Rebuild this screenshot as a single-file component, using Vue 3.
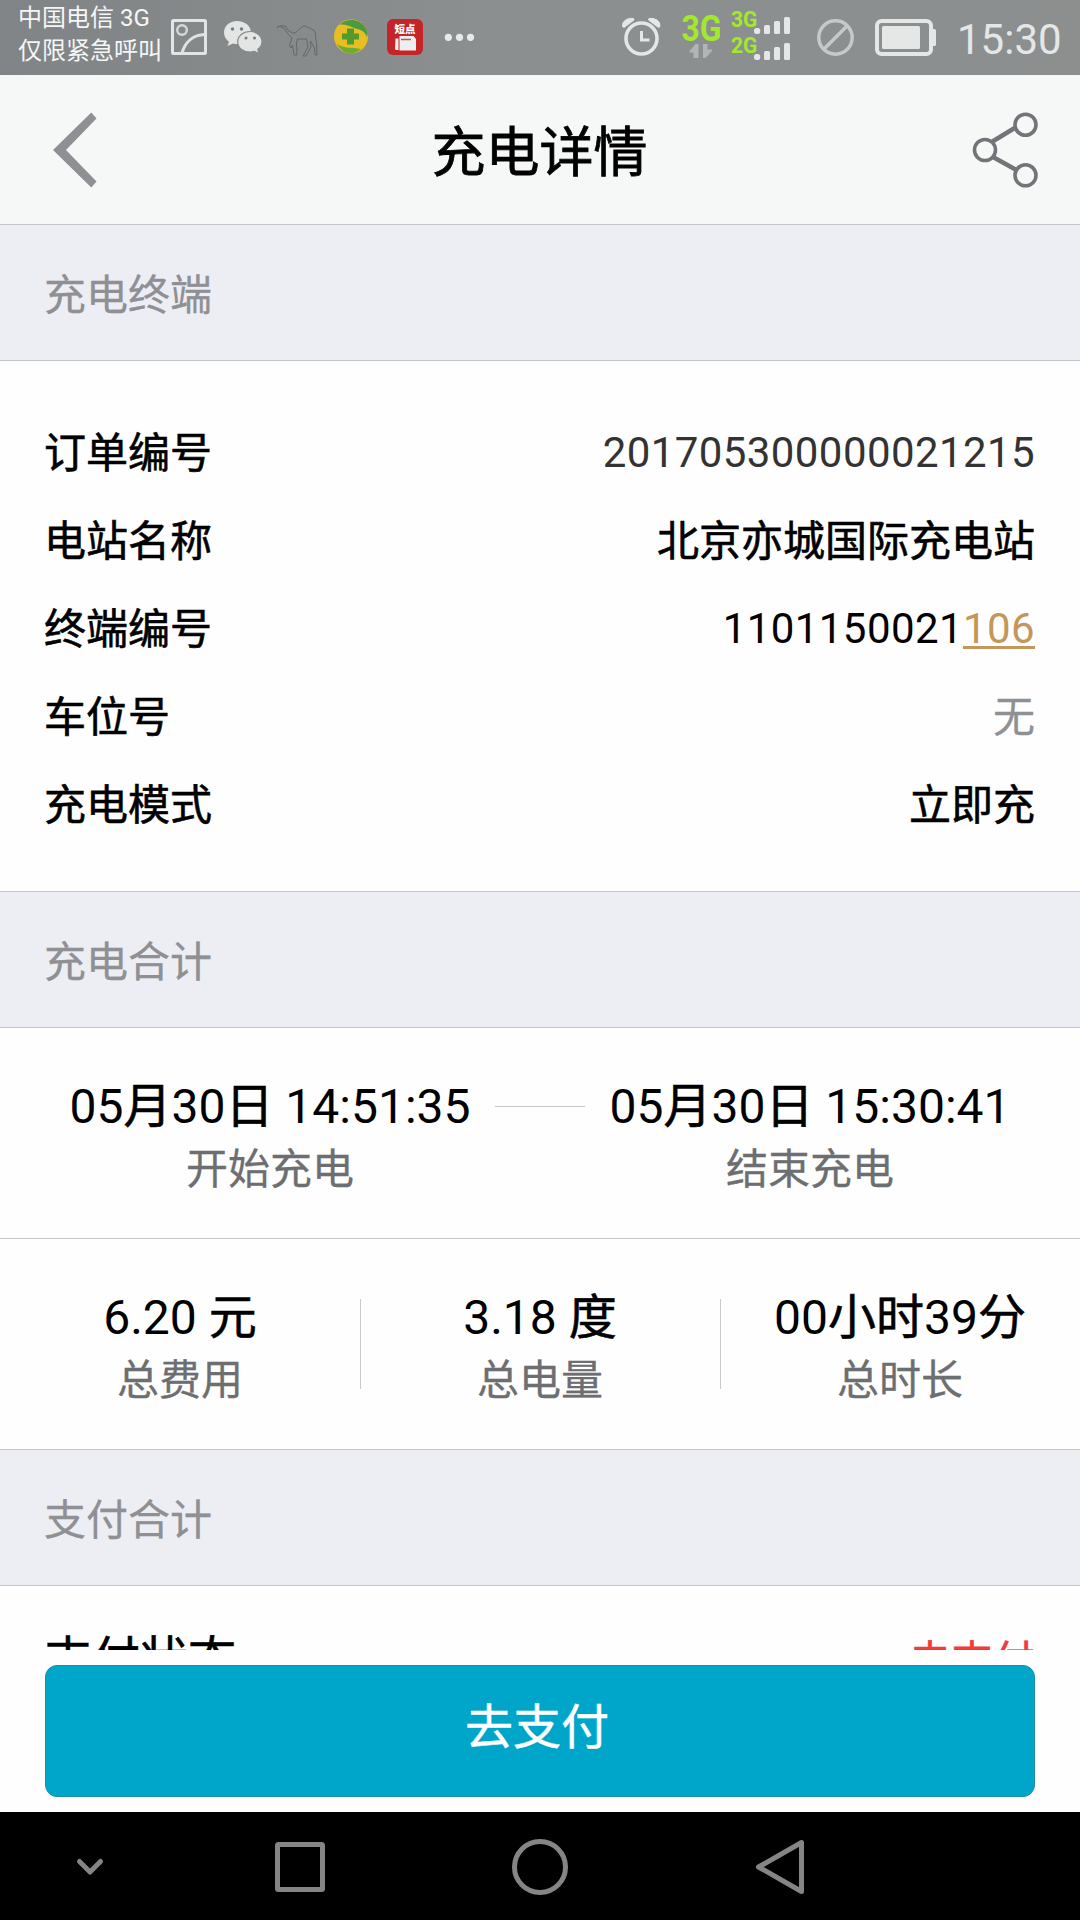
<script setup>
const totals = [
  { parts: ['6.20 ', '元'], label: '总费用' },
  { parts: ['3.18 ', '度'], label: '总电量' },
  { parts: ['00', '小时', '39', '分'], label: '总时长' },
]
const times = [
  { parts: ['05', '月', '30', '日', ' 14:51:35'], label: '开始充电' },
  { parts: ['05', '月', '30', '日', ' 15:30:41'], label: '结束充电' },
]
</script>

<template>
  <div class="screen">
    <div class="status">
      <div class="carrier">
        <div>中国电信 3G</div>
        <div>仅限紧急呼叫</div>
      </div>
      <svg class="tray" width="320" height="75" viewBox="165 0 320 75">
        <rect x="172.5" y="20.5" width="33" height="33" rx="1" fill="none" stroke="#e3e5e5" stroke-width="3" />
        <circle cx="182" cy="30" r="4.8" fill="none" stroke="#d5d8d8" stroke-width="2.4" />
        <path d="M182 53C185 42 193 35 205 34.500" fill="none" stroke="#e0e2e2" stroke-width="3" />
        <path d="M237 21c-7.500 0-13 5-13 11.500 0 4 2 7 5 9.200l-1.500 4.300 5.500-2.500c1.500.400 3 .600 5 .600 7.500 0 13-5 13-11.600C251 26 245 21 237 21z" fill="#e3e5e5" />
        <path d="M250 31.500c-7 0-12.300 4.500-12.300 10.300 0 6 5.300 10.200 12.300 10.200 1.500 0 3-.2 4.300-.7l4.700 2.200-1.200-4.200c2.700-2 4.200-4.500 4.200-7.500 0-5.800-5-10.300-12-10.300z" fill="#e3e5e5" stroke="#85898a" stroke-width="1.200" />
        <g fill="#777b7c"><circle cx="232.500" cy="29" r="1.700" /><circle cx="241.500" cy="29" r="1.700" /><circle cx="246" cy="38" r="1.500" /><circle cx="254.500" cy="38" r="1.500" /></g>
        <path d="M277.500 27.500l3.500-2 5 1 1.500 3.500 5 3q3.500.5 6-3l2-2 3-2 3 .5 4 2 3.500 2q2 2 1.500 6l1 6 .5 12.500h-2l-.5-7-4-7 .5 6-5 9h-3l5-9-1.500-8-9 0-1 4 .5 12h-3l-1.500-10-1.500 3-1.500-3 2.500-7-5-5-3-5-6-2z" fill="none" stroke="#65696a" stroke-width="1" stroke-linejoin="round" />
        <circle cx="351" cy="36.500" r="17" fill="#e7bf22" />
        <path d="M339 25c8-8 21-6 26 2 3 4 3 8 2 10-3-8-9-7-15-10-5-2-9-3-13-2z" fill="#4c9a40" />
        <path d="M337 44c7 5 15 3 24 5-7 7-18 6-24-5z" fill="#6dac32" />
        <path d="M347 28.500h7v5h5v6h-5v5h-7v-5h-5v-6h5z" fill="#52992e" />
        <rect x="387" y="19" width="36" height="36" rx="6" fill="#c52528" />
        <path d="M395.500 38.500h3V50h-2q-1.500 0-1.500-1.500zM399.500 36h14l2.500 3v11.500h-16.500z" fill="#eeeeee" />
        <path d="M401 39.500h10" stroke="#bd5a5a" stroke-width="1.500" />
        <text x="394.500" y="33" font-size="10.500" font-weight="900" fill="#fff">短点</text>
        <g fill="#e8eaea"><circle cx="448.300" cy="37.300" r="3.600" /><circle cx="459.500" cy="37.300" r="3.600" /><circle cx="470.500" cy="37.300" r="3.600" /></g>
      </svg>
      <svg class="signals" width="330" height="75" viewBox="615 0 330 75">
        <circle cx="641.500" cy="38.500" r="15.500" fill="none" stroke="#e5e7e7" stroke-width="3.600" />
        <path d="M641.500 31v9h8" fill="none" stroke="#e5e7e7" stroke-width="3" />
        <path d="M622.500 26.500q-.5-4 3-6.500 4-2.500 8-1.500l.5 1.500-10 7.500zM660 26.500q.500-4-3-6.500-4-2.500-8-1.500l-.5 1.500 10 7.500z" fill="#e5e7e7" stroke="#e5e7e7" />
        <g fill="#a2e82d" font-weight="700">
          <text x="681.500" y="40.500" font-size="36" textLength="40" lengthAdjust="spacingAndGlyphs">3G</text>
          <text x="731" y="26.500" font-size="21.500" textLength="26.500" lengthAdjust="spacingAndGlyphs">3G</text>
          <text x="731" y="52.500" font-size="21.500" textLength="26.500" lengthAdjust="spacingAndGlyphs">2G</text>
        </g>
        <path d="M698.500 44v14h-5v-5.500h-4V51l6-7zM703 58v-14h4.500v5.500h4.500V51l-6.500 7z" fill="#b2b5b5" />
        <g fill="#e5e7e7">
          <rect x="754" y="28" width="6.200" height="6" rx="2.500" /><rect x="764" y="25" width="6" height="9" rx="1.500" /><rect x="774" y="21" width="6" height="13" rx="1.500" /><rect x="784" y="17" width="6" height="17" rx="1.500" />
          <rect x="754" y="54" width="6.200" height="6" rx="2.500" /><rect x="764" y="51" width="6" height="9" rx="1.500" /><rect x="774" y="47" width="6" height="13" rx="1.500" /><rect x="784" y="43" width="6" height="17" rx="1.500" />
        </g>
        <g fill="none" stroke="#c6c9c9" stroke-width="3.500"><circle cx="835.500" cy="37.500" r="16.700" /><path d="M823.500 49.500l24-24" /></g>
        <rect x="877" y="21" width="54" height="33" rx="4.500" fill="none" stroke="#e5e7e7" stroke-width="4" />
        <rect x="882" y="26" width="38" height="23" rx="1.500" fill="#e5e7e7" />
        <path d="M932 29h2.500q1.500 0 1.500 1.500v14q0 1.500-1.500 1.500H932z" fill="#e5e7e7" />
      </svg>
      <div class="clock">15:30</div>
    </div>

    <header class="header">
      <svg width="44" height="76" viewBox="53 112 44 76"><path d="M91.300 112.500l5.200 6L66 150l30.500 31.500-5.200 6L53 150z" fill="#8e9093" /></svg>
      <h1>充电详情</h1>
      <svg width="66" height="76" viewBox="972 112 66 76">
        <g fill="none" stroke="#727477"><g stroke-width="3.600"><circle cx="985" cy="150" r="10.500" /><circle cx="1025.500" cy="124.700" r="10.500" /><circle cx="1025.500" cy="175.300" r="10.500" /></g><path d="M992.500 141.500l23-14M993 157l22.500 12.500" stroke-width="4.500" /></g>
      </svg>
    </header>

    <main class="content">
      <h2>充电终端</h2>
      <section class="details">
        <div class="row"><span class="han">订单编号</span><span class="num dark">201705300000021215</span></div>
        <div class="row"><span class="han">电站名称</span><span class="han">北京亦城国际充电站</span></div>
        <div class="row"><span class="han">终端编号</span><span class="num">1101150021<span class="gold">106</span></span></div>
        <div class="row"><span class="han">车位号</span><span class="han muted">无</span></div>
        <div class="row"><span class="han">充电模式</span><span class="han">立即充</span></div>
      </section>

      <h2>充电合计</h2>
      <section class="stats">
        <div v-for="t in times" :key="t.label" class="stat">
          <div class="value"><span v-for="(p, i) in t.parts" :key="i" :class="{ bold: i % 2 }">{{ p }}</span></div>
          <div class="label">{{ t.label }}</div>
        </div>
        <i class="dash"></i>
      </section>
      <section class="stats totals">
        <div v-for="t in totals" :key="t.label" class="stat">
          <div class="value"><span v-for="(p, i) in t.parts" :key="i" :class="{ bold: i % 2 }">{{ p }}</span></div>
          <div class="label">{{ t.label }}</div>
        </div>
      </section>

      <h2>支付合计</h2>
      <section class="payment">
        <div class="row"><span class="big bold">支付状态</span><span class="red bold">未支付</span></div>
      </section>
    </main>

    <footer class="action"><button>去支付</button></footer>

    <nav class="nav">
      <svg width="1080" height="108" viewBox="0 1812 1080 108" fill="none" stroke="#858585" stroke-linecap="round" stroke-linejoin="round">
        <path d="M79.500 1861.500l10.500 10.500 10.500-10.500" stroke-width="5" />
        <rect x="277.500" y="1844.500" width="45" height="45" rx="1" stroke-width="5" />
        <circle cx="540" cy="1867" r="25.500" stroke-width="5" />
        <path d="M801.500 1842.500v49L758.500 1867z" stroke-width="5" />
      </svg>
    </nav>
  </div>
</template>

<style>
body { margin: 0; }
</style>

<style scoped>
.screen {
  width: 1080px;
  height: 1920px;
  display: flex;
  flex-direction: column;
  overflow: hidden;
  background: #fefefe;
  color: #000;
  font-family: Roboto, "Noto Sans CJK SC", sans-serif;
  white-space: pre;
}
.status {
  height: 75px;
  flex: none;
  display: flex;
  background: linear-gradient(90deg, #808486, #8b8f8f 45%, #8d8f8f);
  color: #e5e7e7;
}
.carrier {
  width: 147px;
  padding: 2px 0 0 18px;
  font-size: 24px;
  line-height: 33px;
  color: #f5f6f6;
}
.signals { margin-left: 130px; }
.clock {
  margin-left: 12px;
  font-size: 42px;
  line-height: 79px;
}
.header {
  height: 149px;
  flex: none;
  box-sizing: border-box;
  padding: 0 42px 0 53px;
  display: flex;
  align-items: center;
  justify-content: space-between;
  background: #f6f8f7;
}
.header h1 {
  margin: 0;
  padding: 8px 0 0 10px;
  font-size: 54px;
  font-weight: 400;
  line-height: 141px;
  -webkit-text-stroke: 0.8px currentColor;
}
.content {
  height: 1426px;
  flex: none;
  overflow: hidden;
}
h2 {
  margin: 0;
  padding: 6px 45px 0 44px;
  height: 129px;
  border-top: 1px solid #c4c5c9;
  border-bottom: 1px solid #c4c5c9;
  background: #edeef3;
  color: #8f9093;
  font-size: 42px;
  font-weight: 400;
  line-height: 129px;
  -webkit-text-stroke: 0.3px currentColor;
}
.details { padding: 48px 45px 42px; }
.row {
  display: flex;
  justify-content: space-between;
  height: 88px;
  font-size: 42px;
  line-height: 88px;
}
.han {
  line-height: 90px;
  -webkit-text-stroke: 0.6px currentColor;
}
.row .han:first-child { margin-left: -1px; }
.bold { -webkit-text-stroke: 0.6px currentColor; }
.num { letter-spacing: 0.41px; }
.dark { color: #333; }
.gold {
  color: #c4965a;
  text-decoration: underline;
  text-decoration-thickness: 3px;
  text-underline-offset: 3px;
}
.row .muted {
  color: #8f9093;
  -webkit-text-stroke-width: 0.3px;
}
.red { color: #f23a38; }
.big {
  margin-left: -1px;
  font-size: 48px;
}
.stats {
  position: relative;
  display: flex;
  height: 210px;
}
.stat {
  flex: 1;
  padding-top: 46px;
  text-align: center;
}
.value {
  font-size: 48px;
  line-height: 65px;
}
.label {
  font-size: 42px;
  line-height: 62px;
  color: #6d6e71;
  -webkit-text-stroke: 0.3px currentColor;
}
.dash {
  position: absolute;
  left: 495px;
  top: 78px;
  width: 90px;
  height: 1px;
  background: #c4c5c9;
}
.totals { border-top: 1px solid #c4c5c9; }
.totals .stat + .stat {
  background: linear-gradient(#c9cacc, #c9cacc) 0 60px / 1px 90px no-repeat;
}
.payment { padding: 30px 45px 0; }
.payment .row { align-items: baseline; }
.action {
  height: 162px;
  flex: none;
  box-sizing: border-box;
  padding: 15px 45px;
}
.action button {
  display: block;
  width: 990px;
  height: 132px;
  padding: 0 6px 17px 0;
  border: 1px solid #1a8fab;
  border-radius: 12px;
  background: #00a5ca;
  color: #fff;
  font: 48px Roboto, "Noto Sans CJK SC", sans-serif;
  -webkit-text-stroke: 0.5px currentColor;
}
.nav {
  height: 108px;
  flex: none;
  background: #000;
}
.nav svg { display: block; }
</style>
